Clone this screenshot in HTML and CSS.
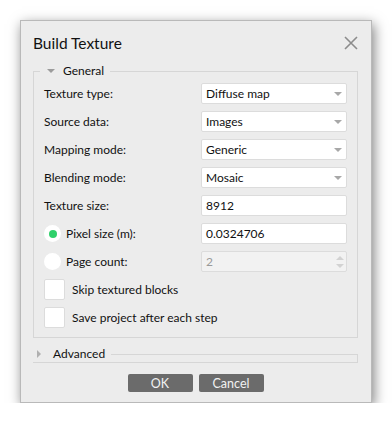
FILE: index.html
```html
<!DOCTYPE html>
<html lang="en">
<head>
    <meta charset="UTF-8">
    <title>Build Texture</title>
    <link rel="stylesheet" href="styles.css">
</head>
<body>

    <!-- Dialog -->
    <div class="dialog">
        <header class="dialog-header">
            <h3>Build Texture</h3>
            <span class="close-btn">
                <svg width="14" height="14" viewBox="0 0 14 14"><path d="M1 1L13 13M13 1L1 13" stroke="#8c8c8c" stroke-width="1.6" fill="none"/></svg>
            </span>
        </header>

        <fieldset class="group">
            <legend><span class="tri-down"></span>General</legend>
            <div class="form-grid">
                <label>Texture type:</label>
                <div class="field combo">Diffuse map<span class="arrow"></span></div>

                <label>Source data:</label>
                <div class="field combo">Images<span class="arrow"></span></div>

                <label>Mapping mode:</label>
                <div class="field combo">Generic<span class="arrow"></span></div>

                <label>Blending mode:</label>
                <div class="field combo">Mosaic<span class="arrow"></span></div>

                <label>Texture size:</label>
                <div class="field">8912</div>

                <label class="radio-label"><span class="radio checked"></span>Pixel size (m):</label>
                <div class="field">0.0324706</div>

                <label class="radio-label"><span class="radio"></span>Page count:</label>
                <div class="field disabled">2<span class="spin"><span class="spin-up"></span><span class="spin-down"></span></span></div>
            </div>
            <div class="check-row"><span class="checkbox"></span>Skip textured blocks</div>
            <div class="check-row"><span class="checkbox"></span>Save project after each step</div>
        </fieldset>

        <fieldset class="group collapsed">
            <legend><span class="tri-right"></span>Advanced</legend>
        </fieldset>

        <footer class="dialog-footer">
            <button>OK</button>
            <button>Cancel</button>
        </footer>
    </div>

</body>
</html>
```

FILE: styles.css
```css
    body {
        font-family: 'Lato', 'Liberation Sans', sans-serif;
        font-size: 12px;
        margin: 0;
        padding: 0;
        background-color: #fff;
        color: #111;
    }

    .dialog {
        box-sizing: border-box;
        width: 352px;
        height: 383px;
        margin: 20px 0 0 20px;
        padding: 0 13px 0 12px;
        background-color: #ececec;
        border: 1px solid #b9b9b9;
        box-shadow: 2px 4px 12px rgba(0, 0, 0, 0.5);
    }
    .dialog-header {
        display: flex;
        align-items: center;
        justify-content: space-between;
        height: 41px;
        padding-top: 1px;
    }
    .dialog-header h3 {
        margin: 0;
        font-size: 15.5px;
        font-weight: normal;
        color: #111;
    }
    .close-btn {
        display: flex;
        margin-right: 0;
    }

    /* Group boxes */
    .group {
        margin: 0;
        padding: 4px 10px 9px 10px;
        border: 1px solid #d6d6d6;
    }
    .group legend {
        display: flex;
        align-items: center;
        margin-left: -4px;
        padding: 0 6px 0 7px;
        line-height: 16px;
    }
    .tri-down {
        width: 0;
        height: 0;
        border-left: 4px solid transparent;
        border-right: 4px solid transparent;
        border-top: 4px solid #9c9c9c;
        margin-right: 8px;
    }
    .tri-right {
        width: 0;
        height: 0;
        border-top: 4px solid transparent;
        border-bottom: 4px solid transparent;
        border-left: 4px solid #b0b0b0;
        margin-right: 12px;
    }
    .collapsed {
        margin-top: 8px;
        padding: 0;
        height: 0;
    }

    .form-grid {
        display: grid;
        grid-template-columns: 157px 1fr;
        grid-auto-rows: 21px;
        row-gap: 7px;
        align-items: center;
    }
    .form-grid label {
        display: flex;
        align-items: center;
    }
    .field {
        box-sizing: border-box;
        height: 21px;
        display: flex;
        align-items: center;
        padding-left: 4px;
        background-color: #fff;
        border: 1px solid #dcdcdc;
        border-radius: 2px;
        position: relative;
    }
    .combo .arrow {
        margin-left: auto;
        margin-right: 4px;
        width: 0;
        height: 0;
        border-left: 4px solid transparent;
        border-right: 4px solid transparent;
        border-top: 4px solid #a8a8a8;
    }
    .field.disabled {
        background-color: #f2f2f2;
        color: #9a9a9a;
    }
    .spin {
        margin-left: auto;
        margin-right: 2px;
        display: flex;
        flex-direction: column;
        gap: 4px;
    }
    .spin-up {
        border-left: 4px solid transparent;
        border-right: 4px solid transparent;
        border-bottom: 4px solid #d2d2d2;
    }
    .spin-down {
        border-left: 4px solid transparent;
        border-right: 4px solid transparent;
        border-top: 4px solid #d2d2d2;
    }

    .radio {
        box-sizing: border-box;
        width: 17px;
        height: 17px;
        border-radius: 50%;
        background-color: #fff;
        margin-right: 5px;
        display: flex;
        align-items: center;
        justify-content: center;
    }
    .radio.checked::after {
        content: "";
        width: 8px;
        height: 8px;
        border-radius: 50%;
        background-color: #2fd06a;
    }

    .check-row {
        display: flex;
        align-items: center;
        height: 21px;
        margin-top: 7px;
    }
    .checkbox {
        box-sizing: border-box;
        width: 21px;
        height: 21px;
        background-color: #fff;
        border: 1px solid #dcdcdc;
        border-radius: 2px;
        margin-right: 7px;
    }

    .dialog-footer {
        display: flex;
        justify-content: center;
        gap: 6px;
        margin-top: 11px;
    }
    .dialog-footer button {
        width: 65px;
        height: 18px;
        padding: 0;
        font-family: inherit;
        font-size: 12.5px;
        background-color: #6b6b6b;
        color: #f2f2f2;
        border: none;
        border-radius: 2px;
    }
```
